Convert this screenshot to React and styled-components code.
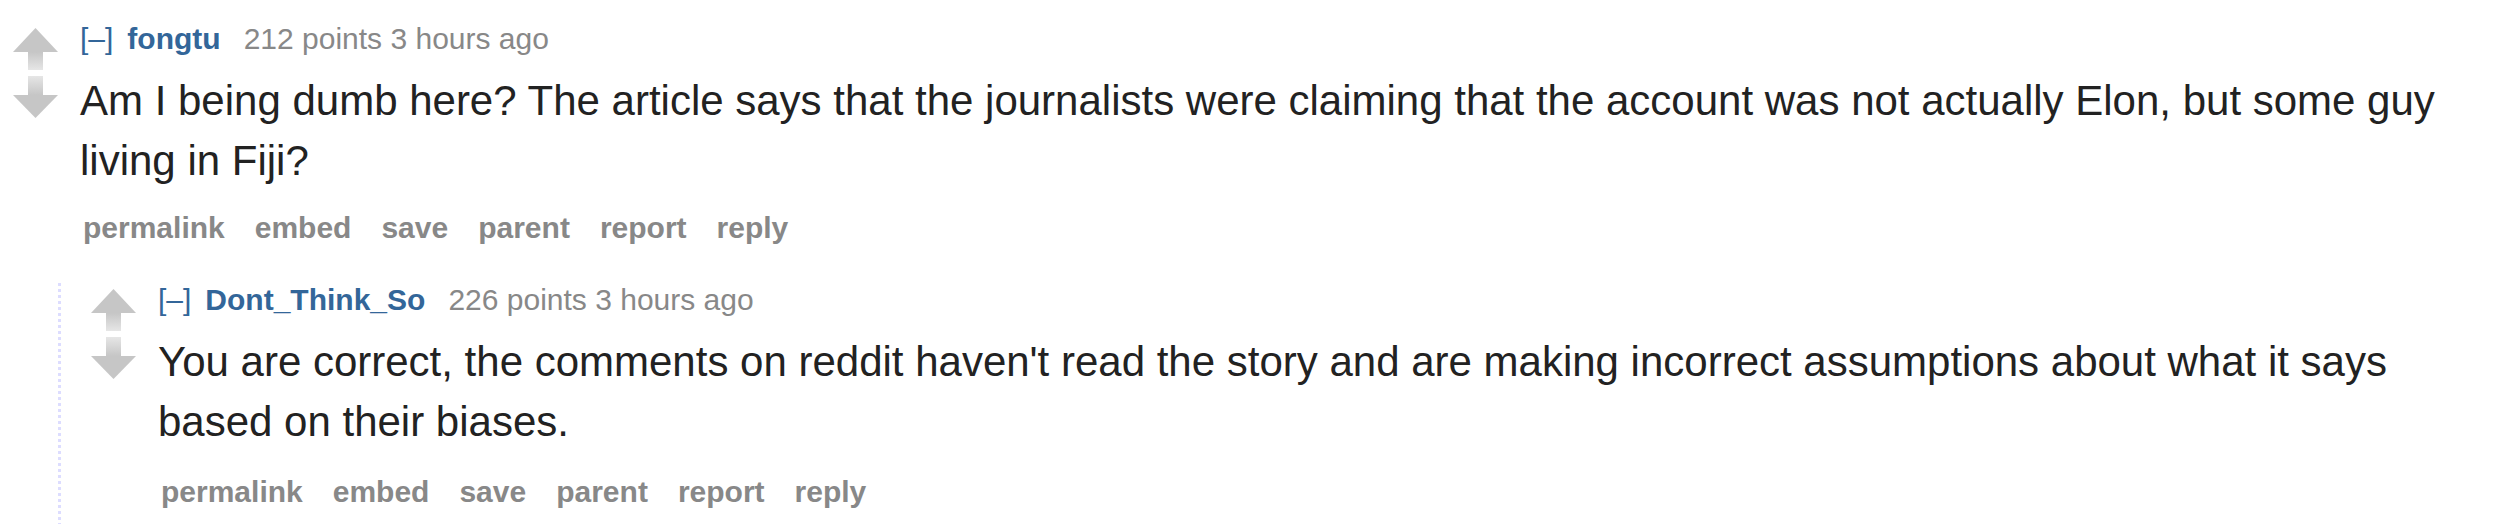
import styled, { createGlobalStyle } from "styled-components";

const GlobalStyle = createGlobalStyle`
  html, body {
    margin: 0;
    padding: 0;
    background: #fff;
  }
  body {
    font-family: "Liberation Sans", Arial, sans-serif;
  }
`;

const Page = styled.div`
  padding: 22px 20px 0 0;
`;

const CommentBox = styled.div`
  margin-left: ${(props) => (props.$nested ? 30 : 13)}px;
`;

const Row = styled.div`
  display: flex;
  align-items: flex-start;
`;

const Midcol = styled.div`
  flex: none;
  width: 45px;
  margin-right: 22px;
  padding-top: 6px;
  display: flex;
  flex-direction: column;
  gap: 6px;
`;

const Entry = styled.div`
  flex: 1;
  min-width: 0;
`;

const Tagline = styled.p`
  margin: 0;
  font-size: 30px;
  line-height: 34px;
  color: #888;
  white-space: nowrap;
`;

const Expand = styled.span`
  color: #369;
  margin-right: 14px;
`;

const Author = styled.span`
  color: #369;
  font-weight: bold;
  margin-right: 23px;
`;

const Body = styled.p`
  margin: 15px 0 0;
  font-size: 42px;
  line-height: 60px;
  color: #222;
`;

const Actions = styled.ul`
  list-style: none;
  margin: ${(props) => (props.$nested ? 23 : 20)}px 0 0;
  padding: 0 0 0 3px;
  display: flex;
  gap: 30px;
  font-size: 30px;
  line-height: 34px;
  font-weight: bold;
  color: #888;
`;

const Child = styled.div`
  margin: 38px 0 0 45px;
  padding: 0 0 20px 3px;
  background: linear-gradient(#ddf 50%, transparent 50%) left top / 3px 6px repeat-y;
`;

function UpArrow() {
  return (
    <svg width="45" height="42" viewBox="0 0 45 42">
      <defs>
        <linearGradient id="upStem" x1="0" y1="0" x2="0" y2="1">
          <stop offset="0" stopColor="#c6c6c6" />
          <stop offset="1" stopColor="#e6e6e6" />
        </linearGradient>
      </defs>
      <polygon points="22.5,0 45,24 0,24" fill="#c6c6c6" />
      <rect x="15" y="24" width="15" height="18" fill="url(#upStem)" />
    </svg>
  );
}

function DownArrow() {
  return (
    <svg width="45" height="42" viewBox="0 0 45 42">
      <defs>
        <linearGradient id="downStem" x1="0" y1="0" x2="0" y2="1">
          <stop offset="0" stopColor="#e6e6e6" />
          <stop offset="1" stopColor="#c6c6c6" />
        </linearGradient>
      </defs>
      <rect x="15" y="0" width="15" height="19" fill="url(#downStem)" />
      <polygon points="0,19 45,19 22.5,42" fill="#c6c6c6" />
    </svg>
  );
}

const actions = ["permalink", "embed", "save", "parent", "report", "reply"];

function Comment({ author, score, age, text, nested, children }) {
  return (
    <CommentBox $nested={nested}>
      <Row>
        <Midcol>
          <UpArrow />
          <DownArrow />
        </Midcol>
        <Entry>
          <Tagline>
            <Expand>[–]</Expand>
            <Author>{author}</Author>
            {score} points {age}
          </Tagline>
          <Body>{text}</Body>
          <Actions $nested={nested}>
            {actions.map((a) => (
              <li key={a}>{a}</li>
            ))}
          </Actions>
        </Entry>
      </Row>
      {children && <Child>{children}</Child>}
    </CommentBox>
  );
}

export default function App() {
  return (
    <>
      <GlobalStyle />
      <Page>
        <Comment
          author="fongtu"
          score={212}
          age="3 hours ago"
          text="Am I being dumb here? The article says that the journalists were claiming that the account was not actually Elon, but some guy living in Fiji?"
        >
          <Comment
            nested
            author="Dont_Think_So"
            score={226}
            age="3 hours ago"
            text="You are correct, the comments on reddit haven't read the story and are making incorrect assumptions about what it says based on their biases."
          />
        </Comment>
      </Page>
    </>
  );
}
